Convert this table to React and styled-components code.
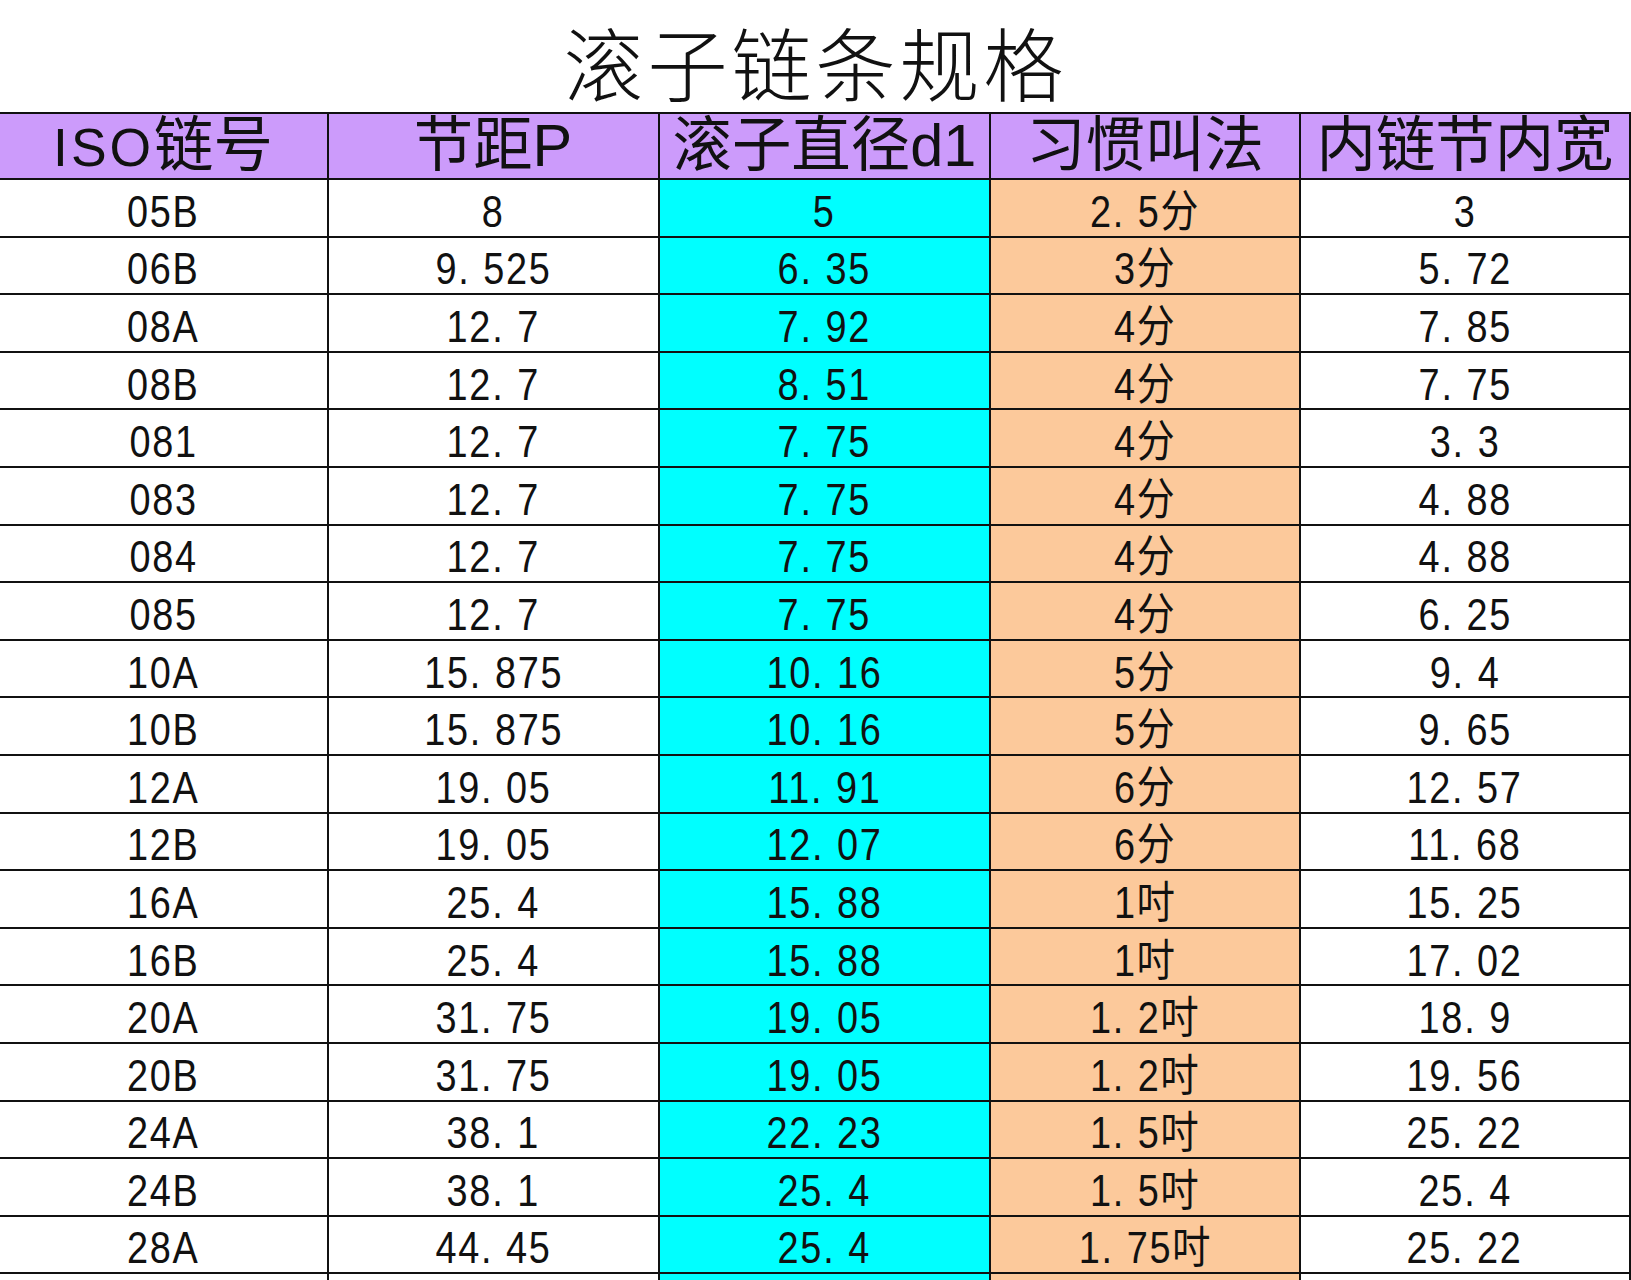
import React from "react";
import styled, { createGlobalStyle } from "styled-components";

const Global = createGlobalStyle`
  html, body { margin: 0; padding: 0; background: #fff; }
  body { font-family: "Liberation Sans", "Noto Sans CJK SC", sans-serif; color: #000; }
`;

const Page = styled.div`
  width: 1631px;
  height: 1280px;
  overflow: hidden;
  background: #fff;
`;

const Title = styled.h1`
  margin: 0;
  height: 112px;
  display: flex;
  align-items: center;
  justify-content: center;
  padding-top: 8px;
  box-sizing: border-box;
  font-family: "Noto Sans CJK SC", sans-serif;
  font-weight: 300;
  font-size: 80px;
  letter-spacing: 4px;
  line-height: 88px;
  color: #111;
`;

const Grid = styled.div`
  display: grid;
  grid-template-columns: 329px 331px 331px 310px 330px;
  border-top: 2px solid #111;
`;

const bgFor = (tone) =>
  tone === "head" ? "#cc9bfb" : tone === "cyan" ? "#00ffff" : tone === "tan" ? "#fcc99b" : "#ffffff";

const Cell = styled.div`
  box-sizing: border-box;
  height: ${(p) => (p.$head ? "66px" : "57.6px")};
  background: ${(p) => bgFor(p.$tone)};
  border-bottom: 2px solid #111;
  border-right: 2px solid #111;
  display: flex;
  align-items: center;
  justify-content: center;
  font-family: "Liberation Sans", "Noto Sans CJK SC", sans-serif;
  font-size: ${(p) => (p.$head ? "60px" : "44px")};
  padding-top: ${(p) => (p.$head ? "0px" : "8px")};
  line-height: ${(p) => (p.$head ? "62px" : "46px")};
  white-space: nowrap;
  color: #111;
`;

const Narrow = styled.span`
  display: inline-block;
  transform: scaleX(${(p) => p.$scale});
  letter-spacing: ${(p) => p.$track || "0px"};
  white-space: nowrap;
`;

const Dot = styled.span`
  margin-right: 0.34em;
`;

const HeadLatin = styled.span`
  font-size: 54px;
  letter-spacing: 3px;
`;

const headers = [
  <><HeadLatin>ISO</HeadLatin>链号</>,
  "节距P",
  "滚子直径d1",
  "习惯叫法",
  "内链节内宽",
];

const rows = [
  ["05B", "8", "5", "2.5分", "3"],
  ["06B", "9.525", "6.35", "3分", "5.72"],
  ["08A", "12.7", "7.92", "4分", "7.85"],
  ["08B", "12.7", "8.51", "4分", "7.75"],
  ["081", "12.7", "7.75", "4分", "3.3"],
  ["083", "12.7", "7.75", "4分", "4.88"],
  ["084", "12.7", "7.75", "4分", "4.88"],
  ["085", "12.7", "7.75", "4分", "6.25"],
  ["10A", "15.875", "10.16", "5分", "9.4"],
  ["10B", "15.875", "10.16", "5分", "9.65"],
  ["12A", "19.05", "11.91", "6分", "12.57"],
  ["12B", "19.05", "12.07", "6分", "11.68"],
  ["16A", "25.4", "15.88", "1吋", "15.25"],
  ["16B", "25.4", "15.88", "1吋", "17.02"],
  ["20A", "31.75", "19.05", "1.2吋", "18.9"],
  ["20B", "31.75", "19.05", "1.2吋", "19.56"],
  ["24A", "38.1", "22.23", "1.5吋", "25.22"],
  ["24B", "38.1", "25.4", "1.5吋", "25.4"],
  ["28A", "44.45", "25.4", "1.75吋", "25.22"],
  ["", "", "", "", ""],
];

const tones = ["white", "white", "cyan", "tan", "white"];

const Value = ({ v }) => {
  if (!v) return null;
  const parts = v.split(".");
  return (
    <Narrow $scale={0.86} $track="2px">
      {parts.length > 1 ? (
        <>
          {parts[0]}
          <Dot>.</Dot>
          {parts[1]}
        </>
      ) : (
        v
      )}
    </Narrow>
  );
};

export default function App() {
  return (
    <Page>
      <Global />
      <Title>滚子链条规格</Title>
      <Grid>
        {headers.map((h, i) => (
          <Cell key={"h" + i} $head $tone="head">
            <Narrow $scale={0.99}>{h}</Narrow>
          </Cell>
        ))}
        {rows.map((r, ri) =>
          r.map((v, ci) => (
            <Cell key={ri + "-" + ci} $tone={tones[ci]}>
              <Value v={v} />
            </Cell>
          ))
        )}
      </Grid>
    </Page>
  );
}
